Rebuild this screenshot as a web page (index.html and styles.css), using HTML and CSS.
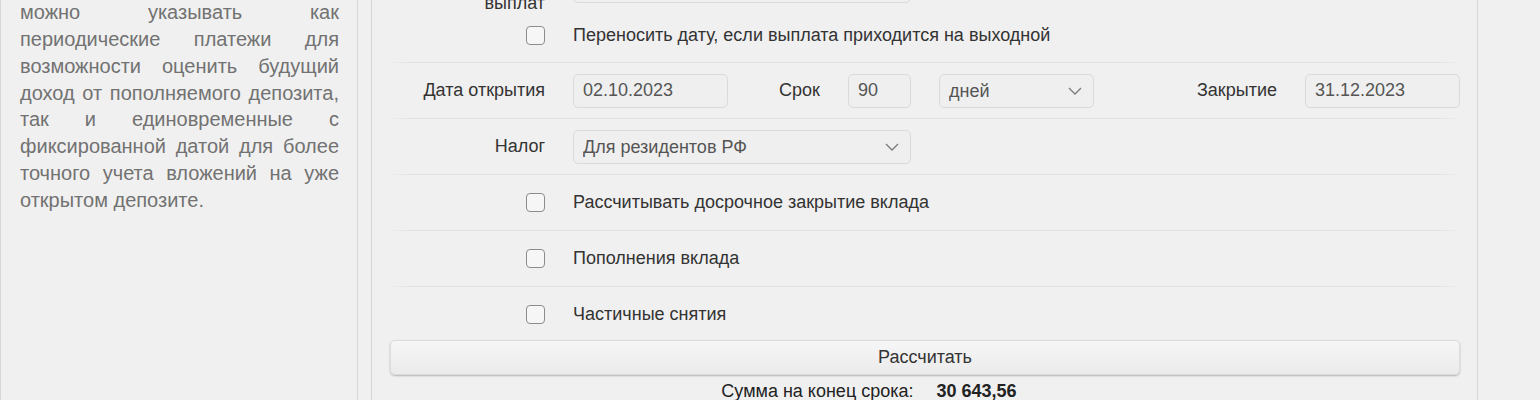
FILE: index.html
```html
<!DOCTYPE html>
<html>
	<head>
		<meta charset="UTF-8">
		<meta name="viewport" content="width=device-width, initial-scale=1">
		<title>Калькулятор вкладов</title>
		<link rel="stylesheet" href="styles.css">
	</head>
	<body>
		<div class="page">
			<aside class="info">
				<p>можно указывать как периодические платежи для возможности оценить будущий доход от пополняемого депозита, так и единовременные с фиксированной датой для более точного учета вложений на уже открытом депозите.</p>
			</aside>
			<form class="calc">
				<div class="row row-top">
					<label class="lbl lbl-2">Периодичность<br>выплат</label>
					<div class="sel span-2">
						<select class="field">
							<option>В конце срока</option>
						</select>
						<svg class="chev" viewBox="0 0 14 8"><path d="M1 1l6 6 6-6"/></svg>
					</div>
				</div>
				<div class="row check">
					<span class="lbl"><input type="checkbox" id="shift"></span>
					<label class="span-4" for="shift">Переносить дату, если выплата приходится на выходной</label>
				</div>
				<div class="row">
					<label class="lbl">Дата открытия</label>
					<input class="field" type="text" value="02.10.2023">
					<div class="pair">
						<label class="lbl">Срок</label>
						<input class="field short" type="text" value="90">
					</div>
					<div class="sel">
						<select class="field">
							<option>дней</option>
							<option>месяцев</option>
						</select>
						<svg class="chev" viewBox="0 0 14 8"><path d="M1 1l6 6 6-6"/></svg>
					</div>
					<label class="lbl">Закрытие</label>
					<input class="field" type="text" value="31.12.2023">
				</div>
				<div class="row">
					<label class="lbl">Налог</label>
					<div class="sel span-2">
						<select class="field">
							<option>Для резидентов РФ</option>
						</select>
						<svg class="chev" viewBox="0 0 14 8"><path d="M1 1l6 6 6-6"/></svg>
					</div>
				</div>
				<div class="row check">
					<span class="lbl"><input type="checkbox" id="early"></span>
					<label class="span-4" for="early">Рассчитывать досрочное закрытие вклада</label>
				</div>
				<div class="row check">
					<span class="lbl"><input type="checkbox" id="refill"></span>
					<label class="span-4" for="refill">Пополнения вклада</label>
				</div>
				<div class="row check">
					<span class="lbl"><input type="checkbox" id="withdraw"></span>
					<label class="span-4" for="withdraw">Частичные снятия</label>
				</div>
				<button type="button" class="go">Рассчитать</button>
				<div class="result">
					<span class="res-lbl">Сумма на конец срока:</span>
					<b class="res-val">30 643,56</b>
				</div>
			</form>
		</div>
	</body>
</html>
```

FILE: styles.css
```css
*, *:before, *:after {
	box-sizing: border-box;
}
html {
	font-family: "Liberation Sans", Arial, sans-serif;
	font-size: 18px;
}
body {
	background: #f0f0f0;
	color: #333;
	margin: 0;
	overflow: hidden;
}
.page {
	display: flex;
	align-items: stretch;
	gap: 13px;
	min-height: 420px;
}
.info {
	width: 358px;
	flex: none;
	border-left: 1px solid #d6d6d6;
	border-right: 1px solid #d6d6d6;
	padding: 0 18px 0 19px;
}
.info p {
	margin: -1px 0 0;
	font-size: 20px;
	line-height: 26.85px;
	color: #727272;
	text-align: justify;
}
.calc {
	width: 1107px;
	flex: none;
	border-left: 1px solid #d6d6d6;
	border-right: 1px solid #d6d6d6;
	padding: 0 17px 0 18px;
}
.row {
	display: grid;
	grid-template-columns: repeat(6, 155px);
	column-gap: 28px;
	align-items: center;
	height: 56px;
	border-bottom: 1px solid #e2e2e2;
	border-image: linear-gradient(to right, rgba(226,226,226,0), #e2e2e2 20px, #e2e2e2 calc(100% - 20px), rgba(226,226,226,0)) 1;
}
.row-top {
	height: 34px;
	margin-top: -31px;
	align-items: start;
	border: 0;
}
.row-top + .row {
	margin-top: 5px;
	height: 55px;
}
.lbl {
	text-align: right;
	color: #333;
}
.lbl-2 {
	line-height: 20px;
	padding-top: 4px;
}
.span-2 {
	grid-column: span 2;
}
.span-4 {
	grid-column: span 4;
}
.field {
	display: block;
	width: 100%;
	height: 34px;
	font-family: inherit;
	font-size: 18px;
	color: #555;
	background: #efefef;
	border: 1px solid #dadada;
	border-radius: 5px;
	padding: 0 9px;
	outline: none;
}
select.field {
	appearance: none;
	-webkit-appearance: none;
	padding-right: 30px;
}
.sel {
	position: relative;
}
.chev {
	position: absolute;
	right: 12px;
	top: 13px;
	width: 14px;
	height: 8px;
	fill: none;
	stroke: #7a7a7a;
	stroke-width: 1.3;
	pointer-events: none;
}
.pair {
	display: flex;
	align-items: center;
	gap: 28px;
}
.pair .lbl {
	flex: 1;
}
.field.short {
	width: 63px;
	flex: none;
}
.check input {
	appearance: none;
	-webkit-appearance: none;
	display: inline-block;
	vertical-align: middle;
	width: 19px;
	height: 19px;
	margin: 0;
	border: 1.5px solid #8c8c8c;
	border-radius: 4px;
	background: #f6f6f6;
}
.check .lbl {
	line-height: 0;
}
.check label {
	color: #333;
}
.go {
	display: block;
	width: 100%;
	height: 35px;
	margin-top: -3px;
	font-family: inherit;
	font-size: 18px;
	color: #333;
	background: linear-gradient(#f6f6f6, #ebebeb);
	border: 1px solid #dcdcdc;
	border-radius: 5px;
	box-shadow: 0 1px 2px rgba(0,0,0,.25);
}
.result {
	display: grid;
	grid-template-columns: 1fr 1fr;
	column-gap: 23px;
	margin-top: 4px;
	line-height: 24px;
	color: #222;
}
.res-lbl {
	text-align: right;
}
```
